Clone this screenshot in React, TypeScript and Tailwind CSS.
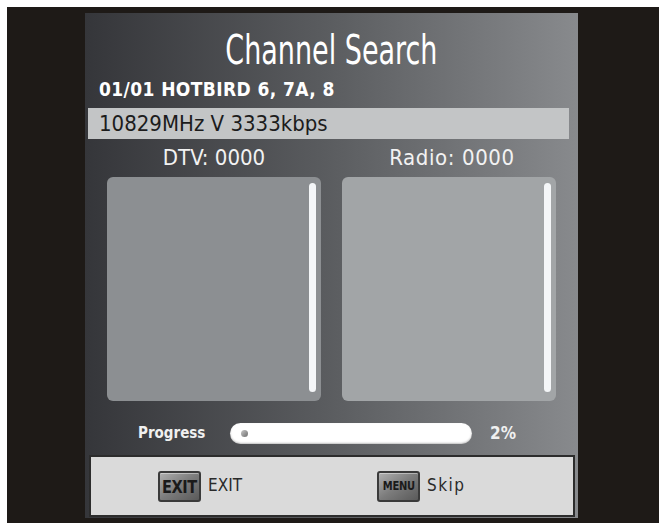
import React from "react";

const font = { fontFamily: '"DejaVu Sans Condensed", "DejaVu Sans", "Liberation Sans", sans-serif' };

function Key({ label, small }: { label: string; small?: boolean }) {
  return (
    <div className="flex h-[31px] w-[43px] items-center justify-center overflow-hidden rounded-[3px] border-2 border-[#3a3a3a] bg-gradient-to-br from-[#b0b0b0] via-[#7c7c7c] to-[#5a5a5a] shadow-[inset_0_1px_0_rgba(255,255,255,0.4)]">
      <span className={small ? "inline-block scale-x-[0.85] text-[13px] font-bold tracking-tight text-[#1a1a1a]" : "inline-block scale-x-[0.9] text-[18px] font-bold tracking-tight text-[#1a1a1a]"}>{label}</span>
    </div>
  );
}

function ListBox({ light }: { light?: boolean }) {
  return (
    <div className={"flex h-[224px] w-[214px] justify-end rounded-[6px] pr-[5px] pt-[6px] pb-[9px] " + (light ? "bg-[#a2a5a7]" : "bg-[#8c8f92]")}>
      <div className="h-full w-[7px] rounded-full bg-[#f4f6f8]" />
    </div>
  );
}

export default function App() {
  return (
    <div className="h-[523px] w-[659px] bg-white pl-[7px] pt-[7px]" style={font}>
      <div className="flex h-[516px] w-[652px] bg-[#1e1a17] pl-[78px] pt-[6px]">
        <div className="flex h-[505px] w-[493px] flex-col bg-gradient-to-r from-[#35363a] via-[#5b5d60] to-[#888a8d]">
          <div className="mt-[14px] text-center text-[40px] leading-[46px] text-white">
            <span className="inline-block scale-x-[0.75]">Channel Search</span>
          </div>
          <div className="ml-[14px] mt-[5px] text-[19px] font-bold leading-[22px] tracking-[0.4px] text-white">01/01 HOTBIRD 6, 7A, 8</div>
          <div className="ml-[3px] mt-[8px] flex h-[31px] w-[481px] items-center bg-[#c3c5c6] pl-[11px] text-[22px] text-[#1c1c1c]">10829MHz V 3333kbps</div>
          <div className="mt-[7px] flex pl-[22px]">
            <div className="w-[214px] text-center text-[22px] leading-[24px] text-[#f2f2f2]">DTV: 0000</div>
            <div className="ml-[21px] w-[214px] pl-[6px] text-center text-[22px] leading-[24px] tracking-[0.6px] text-[#f2f2f2]">Radio: 0000</div>
          </div>
          <div className="mt-[7px] flex gap-[21px] pl-[22px]">
            <ListBox />
            <ListBox light />
          </div>
          <div className="mt-[22px] flex h-[21px] items-center pl-[53px]">
            <div className="w-[92px] text-[15px] font-bold text-[#f0f0f0]">Progress</div>
            <div className="flex h-[21px] w-[242px] items-center rounded-full bg-white pl-[11px] shadow-[inset_0_-1px_2px_rgba(0,0,0,0.25)]">
              <div className="h-[7px] w-[7px] rounded-full bg-gradient-to-br from-[#c8c8c8] to-[#6e6e6e]" />
            </div>
            <div className="ml-[18px] text-[17px] font-bold text-[#f0f0f0]">2%</div>
          </div>
          <div className="ml-[4px] mt-[11px] flex h-[62px] w-[486px] items-center border-2 border-[#2c2c2c] bg-[#dadada] pl-[67px]">
            <Key label="EXIT" />
            <span className="ml-[7px] text-[17px] text-[#2a2a2a]">EXIT</span>
            <div className="ml-[135px]">
              <Key label="MENU" small />
            </div>
            <span className="ml-[7px] text-[17px] tracking-[1.5px] text-[#2a2a2a]">Skip</span>
          </div>
        </div>
      </div>
    </div>
  );
}
